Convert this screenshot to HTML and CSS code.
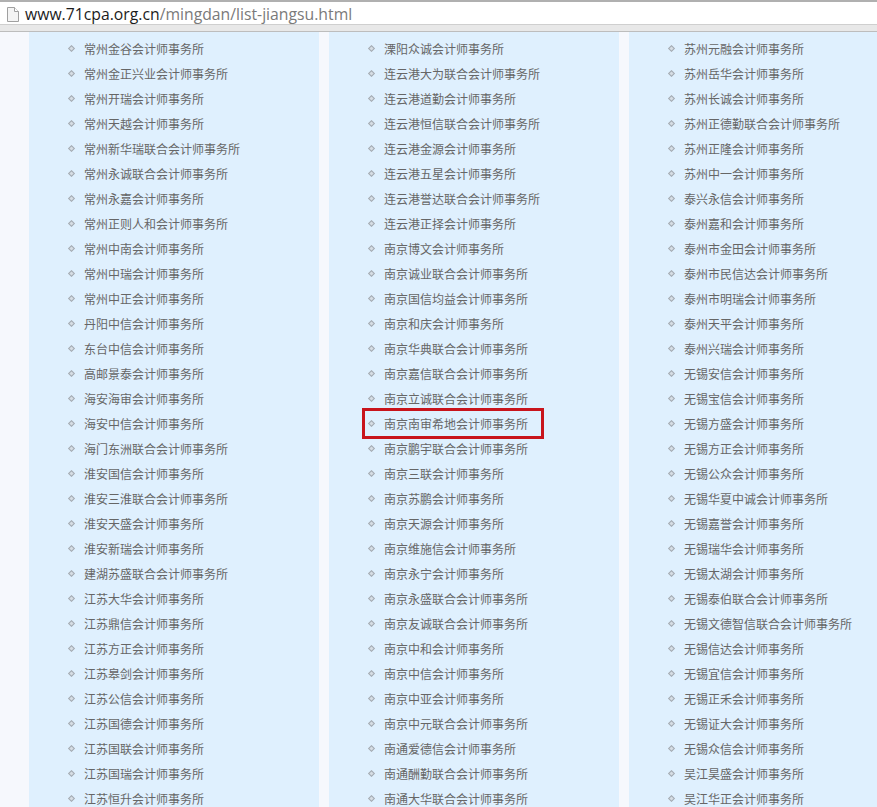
FILE: index.html
```html
<!DOCTYPE html>
<html lang="zh-CN">
<head>
<meta charset="utf-8">
<title>list-jiangsu</title>
<link rel="stylesheet" href="styles.css">
</head>
<body>
<header class="addressbar">
  <svg class="page-icon" width="12" height="15" viewBox="0 0 12 15"><path d="M.5.5h7l4 4v10H.5z" fill="#f4f4f4" stroke="#a0a0a0"/><path d="M7.5.5v4h4" fill="#fff" stroke="#a0a0a0"/></svg>
  <div class="url"><span class="host">www.71cpa.org.cn</span><span class="path">/mingdan/list-jiangsu.html</span></div>
</header>
<main class="columns">
  <ul class="column">
    <li>常州金谷会计师事务所</li><li>常州金正兴业会计师事务所</li><li>常州开瑞会计师事务所</li><li>常州天越会计师事务所</li><li>常州新华瑞联合会计师事务所</li><li>常州永诚联合会计师事务所</li><li>常州永嘉会计师事务所</li><li>常州正则人和会计师事务所</li><li>常州中南会计师事务所</li><li>常州中瑞会计师事务所</li><li>常州中正会计师事务所</li><li>丹阳中信会计师事务所</li><li>东台中信会计师事务所</li><li>高邮景泰会计师事务所</li><li>海安海审会计师事务所</li><li>海安中信会计师事务所</li><li>海门东洲联合会计师事务所</li><li>淮安国信会计师事务所</li><li>淮安三淮联合会计师事务所</li><li>淮安天盛会计师事务所</li><li>淮安新瑞会计师事务所</li><li>建湖苏盛联合会计师事务所</li><li>江苏大华会计师事务所</li><li>江苏鼎信会计师事务所</li><li>江苏方正会计师事务所</li><li>江苏皋剑会计师事务所</li><li>江苏公信会计师事务所</li><li>江苏国德会计师事务所</li><li>江苏国联会计师事务所</li><li>江苏国瑞会计师事务所</li><li>江苏恒升会计师事务所</li>
  </ul>
  <ul class="column">
    <li>溧阳众诚会计师事务所</li><li>连云港大为联合会计师事务所</li><li>连云港道勤会计师事务所</li><li>连云港恒信联合会计师事务所</li><li>连云港金源会计师事务所</li><li>连云港五星会计师事务所</li><li>连云港誉达联合会计师事务所</li><li>连云港正择会计师事务所</li><li>南京博文会计师事务所</li><li>南京诚业联合会计师事务所</li><li>南京国信均益会计师事务所</li><li>南京和庆会计师事务所</li><li>南京华典联合会计师事务所</li><li>南京嘉信联合会计师事务所</li><li>南京立诚联合会计师事务所</li><li class="marked">南京南审希地会计师事务所</li><li>南京鹏宇联合会计师事务所</li><li>南京三联会计师事务所</li><li>南京苏鹏会计师事务所</li><li>南京天源会计师事务所</li><li>南京维施信会计师事务所</li><li>南京永宁会计师事务所</li><li>南京永盛联合会计师事务所</li><li>南京友诚联合会计师事务所</li><li>南京中和会计师事务所</li><li>南京中信会计师事务所</li><li>南京中亚会计师事务所</li><li>南京中元联合会计师事务所</li><li>南通爱德信会计师事务所</li><li>南通酬勤联合会计师事务所</li><li>南通大华联合会计师事务所</li>
  </ul>
  <ul class="column">
    <li>苏州元融会计师事务所</li><li>苏州岳华会计师事务所</li><li>苏州长诚会计师事务所</li><li>苏州正德勤联合会计师事务所</li><li>苏州正隆会计师事务所</li><li>苏州中一会计师事务所</li><li>泰兴永信会计师事务所</li><li>泰州嘉和会计师事务所</li><li>泰州市金田会计师事务所</li><li>泰州市民信达会计师事务所</li><li>泰州市明瑞会计师事务所</li><li>泰州天平会计师事务所</li><li>泰州兴瑞会计师事务所</li><li>无锡安信会计师事务所</li><li>无锡宝信会计师事务所</li><li>无锡方盛会计师事务所</li><li>无锡方正会计师事务所</li><li>无锡公众会计师事务所</li><li>无锡华夏中诚会计师事务所</li><li>无锡嘉誉会计师事务所</li><li>无锡瑞华会计师事务所</li><li>无锡太湖会计师事务所</li><li>无锡泰伯联合会计师事务所</li><li>无锡文德智信联合会计师事务所</li><li>无锡信达会计师事务所</li><li>无锡宜信会计师事务所</li><li>无锡正禾会计师事务所</li><li>无锡证大会计师事务所</li><li>无锡众信会计师事务所</li><li>吴江昊盛会计师事务所</li><li>吴江华正会计师事务所</li>
  </ul>
</main>
</body>
</html>
```
FILE: styles.css
```css
html, body {
  margin: 0;
  height: 807px;
  overflow: hidden;
  background: #f6f8fd;
}
.addressbar {
  box-sizing: border-box;
  height: 32px;
  display: flex;
  align-items: flex-start;
  gap: 6px;
  padding: 5px 0 0 7px;
  background: #fff;
  border-top: 2px solid #b0b0b0;
  border-bottom: 1px solid #bdbdbd;
  box-shadow: inset 0 -6px 0 #e8e8e8, inset 0 -7px 0 #cfcfcf;
}
.page-icon { flex: none; }
.url {
  font: 15.75px/15px "Open Sans", sans-serif;
  white-space: nowrap;
}
.host { color: #1c1c1c; }
.path { color: #7a7a7a; }
.columns {
  display: flex;
  gap: 10px;
  padding-left: 29px;
}
.column {
  flex: none;
  width: 290px;
  box-sizing: border-box;
  height: 775px;
  margin: 0;
  padding: 4px 0 0 55px;
  list-style: none;
  background: #dff0fe;
}
.column li {
  position: relative;
  height: 25px;
  font: 12px/25px "Noto Sans CJK SC", sans-serif;
  color: #666;
  white-space: nowrap;
}
.column li::before {
  content: "";
  position: absolute;
  left: -15px;
  top: 10px;
  width: 3px;
  height: 3px;
  background: #d6dde4;
  border: 1px solid #a3abb3;
  transform: rotate(45deg);
}
.marked::after {
  content: "";
  position: absolute;
  left: -22px;
  top: -3px;
  width: 176px;
  height: 25px;
  border: 3px solid #c8141c;
}
```
